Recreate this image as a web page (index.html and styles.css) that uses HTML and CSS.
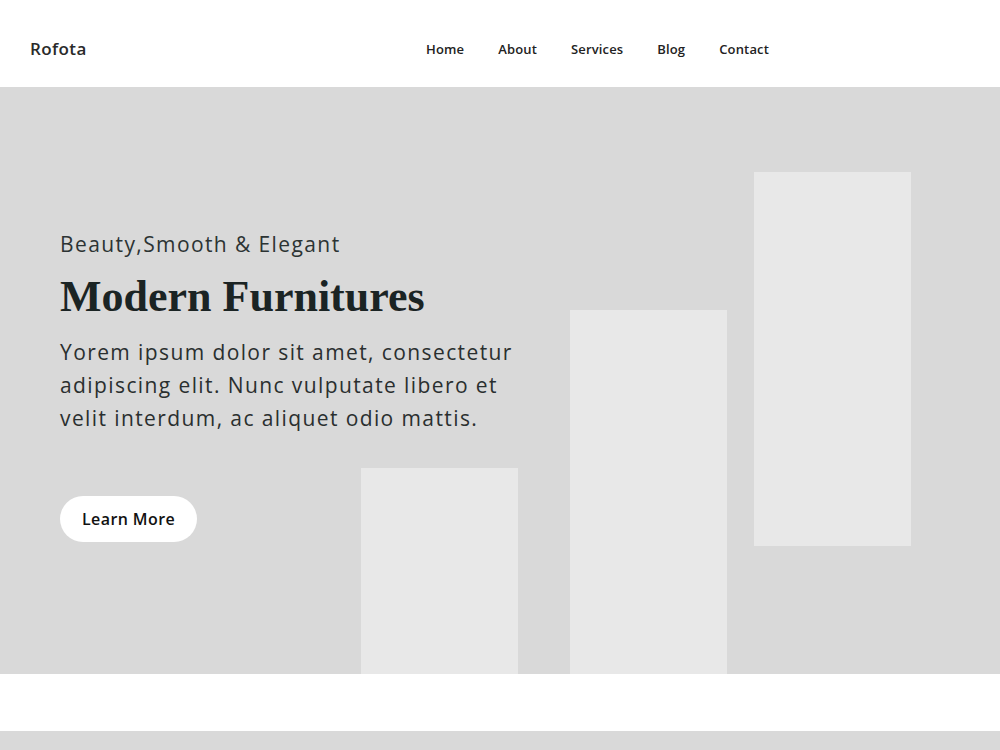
FILE: index.html
```html
<!DOCTYPE html>
<html lang="en">
<head>
    <meta charset="UTF-8">
    <meta name="viewport" content="width=device-width, initial-scale=1.0">
    <title>Rofota</title>
    <link rel="stylesheet" href="styles.css">
</head>
<body>
    <header class="header">
        <div class="logo">Rofota</div>
        <nav class="nav">
            <a href="#">Home</a>
            <a href="#">About</a>
            <a href="#">Services</a>
            <a href="#">Blog</a>
            <a href="#">Contact</a>
        </nav>
    </header>
    <section class="hero">
        <div class="bars">
            <div class="bar bar-1"></div>
            <div class="bar bar-2"></div>
            <div class="bar bar-3"></div>
        </div>
        <div class="hero-text">
            <p class="tagline">Beauty,Smooth &amp; Elegant</p>
            <h1>Modern Furnitures</h1>
            <p class="lead">Yorem ipsum dolor sit amet, consectetur adipiscing elit. Nunc vulputate libero et velit interdum, ac aliquet odio mattis.</p>
            <a class="button" href="#">Learn More</a>
        </div>
    </section>
    <div class="spacer"></div>
    <section class="next"></section>
</body>
</html>
```

FILE: styles.css
```css
body, html {
    margin: 0;
    padding: 0;
    font-family: "Open Sans", Arial, sans-serif;
    color: #1f2626;
    background: white;
}
.header {
    height: 87px;
    display: flex;
    align-items: center;
    padding: 10px 30px 0;
    box-sizing: border-box;
}
.logo {
    font-size: 17px;
    font-weight: 600;
    letter-spacing: 0.4px;
    color: #2a2a2a;
    width: 396px;
}
.nav {
    display: flex;
    gap: 34px;
}
.nav a {
    font-size: 13px;
    font-weight: 600;
    letter-spacing: 0.15px;
    color: #222;
    text-decoration: none;
}
.hero {
    display: grid;
    height: 587px;
    background: #d9d9d9;
}
.hero > * {
    grid-area: 1 / 1;
}
.bars {
    display: flex;
    align-items: flex-end;
    justify-self: end;
    padding-right: 89px;
}
.bar {
    width: 157px;
    background: #e8e8e8;
}
.bar-1 {
    height: 206px;
}
.bar-2 {
    height: 364px;
    margin-left: 52px;
}
.bar-3 {
    height: 374px;
    margin-left: 27px;
    margin-bottom: 128px;
}
.hero-text {
    padding: 142px 0 0 60px;
    position: relative; /* keep text above the bars */
    align-self: start;
}
.tagline {
    margin: 0;
    font-size: 21px;
    line-height: 30px;
    letter-spacing: 1.4px;
    color: #2c3333;
}
h1 {
    margin: 13px 0 0;
    font-family: "Liberation Serif", "DejaVu Serif", serif;
    font-size: 44px;
    line-height: 50px;
    font-weight: bold;
    color: #1b2424;
}
.lead {
    margin: 14px 0 0;
    width: 475px;
    font-size: 21px;
    line-height: 33px;
    letter-spacing: 1.4px;
    color: #2a2f2f;
}
.button {
    display: inline-block;
    margin-top: 61px;
    padding: 0 22px;
    height: 46px;
    line-height: 46px;
    border-radius: 23px;
    background: white;
    color: #111;
    font-size: 16px;
    font-weight: 600;
    letter-spacing: 0.4px;
    text-decoration: none;
}
.spacer {
    height: 57px;
}
.next {
    height: 100px;
    background: #d9d9d9;
}
```
